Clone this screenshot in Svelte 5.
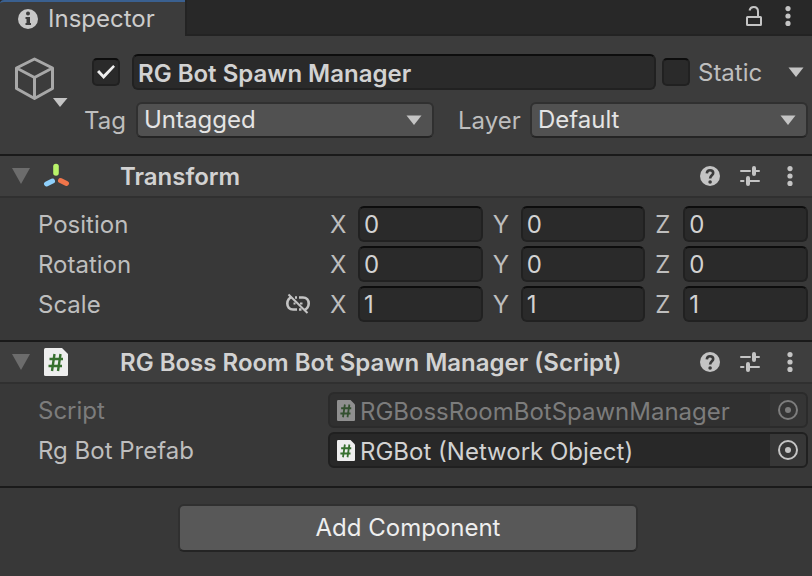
<script>
  let name = $state('RG Bot Spawn Manager');
  let active = $state(true);
  let isStatic = $state(false);
  let tag = $state('Untagged');
  let layer = $state('Default');
  let transform = $state([
    { label: 'Position', values: { X: '0', Y: '0', Z: '0' } },
    { label: 'Rotation', values: { X: '0', Y: '0', Z: '0' } },
    { label: 'Scale', values: { X: '1', Y: '1', Z: '1' }, linkable: true }
  ]);
  const references = [
    { id: 'script', label: 'Script', value: 'RGBossRoomBotSpawnManager', disabled: true },
    { id: 'prefab', label: 'Rg Bot Prefab', value: 'RGBot (Network Object)', disabled: false }
  ];
</script>

{#snippet arrow()}
  <svg class="arrow" width="16" height="10" viewBox="0 0 16 10" aria-hidden="true"><path d="M0.500 0.500H15.500L8 10Z" fill="#c4c4c4" /></svg>
{/snippet}

{#snippet dots()}
  <svg width="20" height="20" viewBox="0 0 20 20" aria-hidden="true" fill="#c4c4c4">
    <circle cx="10" cy="2.6" r="2.6" /><circle cx="10" cy="10" r="2.6" /><circle cx="10" cy="17.4" r="2.6" />
  </svg>
{/snippet}

{#snippet scriptIcon(width, height)}
  <svg class="file" {width} {height} viewBox="0 0 24 28" aria-hidden="true">
    <path d="M1.5 0H18L24 6V26.500Q24 28 22.500 28H1.500Q0 28 0 26.500V1.500Q0 0 1.500 0Z" fill="#eeeeee" />
    <path d="M10.500 6 8 23M16.500 6 14 23M5.500 11H19M4.500 18H18" stroke="#37702f" stroke-width="2.400" fill="none" />
  </svg>
{/snippet}

{#snippet headerTools()}
  <div class="tools">
    <button class="icon" aria-label="Open reference">
      <svg width="20" height="20" viewBox="0 0 20 20">
        <circle cx="10" cy="10" r="10" fill="#c4c4c4" />
        <path d="M6.800 7.300C7 5.200 8.200 4.200 10 4.200S13.200 5.300 13.200 7C13.200 9.300 10.100 9.300 10.100 12.500" fill="none" stroke="#3a3a3a" stroke-width="2.600" />
        <circle cx="10.100" cy="16" r="1.800" fill="#3a3a3a" />
      </svg>
    </button>
    <button class="icon" aria-label="Presets">
      <svg width="20" height="20" viewBox="0 0 20 20" fill="none" stroke="#c4c4c4">
        <path d="M1 5H10M16 5H19M1 15H3.500M10 15H19" stroke-width="2" stroke-linecap="round" />
        <path d="M14 2V8M8 12V18" stroke-width="4" stroke-linecap="round" />
      </svg>
    </button>
    <button class="icon" aria-label="More options">{@render dots()}</button>
  </div>
{/snippet}

{#snippet foldout()}
  <button class="icon" aria-label="Toggle section">
    <svg width="18" height="16" viewBox="0 0 18 16"><path d="M0 0H18L9 16Z" fill="#6c6c6c" /></svg>
  </button>
{/snippet}

<main>
  <header class="tabbar">
    <button class="tab">
      <svg width="20" height="20" viewBox="0 0 20 20" aria-hidden="true">
        <circle cx="10" cy="10" r="10" fill="#c8c8c8" />
        <circle cx="10" cy="4.500" r="2" fill="#3c3c3c" />
        <path d="M7.500 8H12V14H13V16H7.500V14H8.500V10H7.500Z" fill="#3c3c3c" />
      </svg>
      Inspector
    </button>
    <div class="tabtools">
      <button class="icon" aria-label="Lock">
        <svg width="20" height="20" viewBox="0 0 20 20" fill="none" stroke="#c4c4c4" stroke-width="2">
          <rect x="3" y="11" width="14" height="8" rx="0.500" />
          <path d="M5.500 4.500C6 2.300 7.500 1 9.700 1C12.500 1 14 3 14 5.500V10" />
        </svg>
      </button>
      <button class="icon" aria-label="Window menu">{@render dots()}</button>
    </div>
  </header>

  <section class="object">
    <button class="cube" aria-label="Select icon">
      <svg width="54" height="54" viewBox="0 0 54 54" fill="none">
        <path d="M20.500 5 38.500 14V34.500L20.500 44.500 2.500 34.500V14ZM2.500 14 20.500 23.500 38.500 14M20.500 23.500V44.500" stroke="#a8a8a8" stroke-width="3" stroke-linejoin="round" />
        <path d="M39 44H53.500L46 53Z" fill="#c4c4c4" />
      </svg>
    </button>
    <div class="fields">
      <div class="identity">
        <input type="checkbox" aria-label="Active" bind:checked={active} />
        <input class="box name" type="text" aria-label="Name" bind:value={name} />
        <input id="static" type="checkbox" bind:checked={isStatic} />
        <div class="static">
          <label for="static">Static</label>
          <button class="icon" aria-label="Static flags">{@render arrow()}</button>
        </div>
      </div>
      <div class="filters">
        <label class="taglabel" for="tag">Tag</label>
        <div class="select tagselect">
          <select id="tag" bind:value={tag}><option>Untagged</option><option>Player</option></select>
          {@render arrow()}
        </div>
        <label class="layerlabel" for="layer">Layer</label>
        <div class="select layerselect">
          <select id="layer" bind:value={layer}><option>Default</option><option>UI</option></select>
          {@render arrow()}
        </div>
      </div>
    </div>
  </section>

  <section class="component">
    <header class="title">
      {@render foldout()}
      <svg width="24" height="28" viewBox="0 0 24 28" aria-hidden="true" overflow="visible" fill="none" stroke-linecap="round">
        <path d="M12 4.500V11" stroke="#b9f36a" stroke-width="5.600" />
        <path d="M8.500 19 2.500 22" stroke="#8fd0fb" stroke-width="5" />
        <path d="M16.500 18.500 22.500 21.500" stroke="#f0754a" stroke-width="5" />
      </svg>
      <h2>Transform</h2>
      {@render headerTools()}
    </header>
    <div class="body">
      {#each transform as row}
        <div class="row">
          <div class="caption">
            <span class="text">{row.label}</span>
            {#if row.linkable}
              <button class="icon" aria-label="Constrain proportions">
                <svg width="24" height="22" viewBox="0 0 24 22" fill="none" stroke="#c4c4c4" stroke-width="2.600">
                  <path d="M11 16.500H7C3.500 16.500 1.300 14 1.300 10.500S3.500 4.500 5.500 4.500M13 4.500H17C20.500 4.500 22.700 7 22.700 10.500S20.500 16.500 18.500 16.500M13 16.500H15.500M9 4.500H11" />
                  <path d="M7.500 10.500H9.500M14 10.500H16.500" stroke-width="2" />
                  <path d="M2.500 1.500 21.500 20" stroke-width="2" />
                </svg>
              </button>
            {/if}
          </div>
          <div class="vector">
            {#each ['X', 'Y', 'Z'] as axis}
              <label><span class="text">{axis}</span><input class="box" type="text" aria-label="{row.label} {axis}" bind:value={row.values[axis]} /></label>
            {/each}
          </div>
        </div>
      {/each}
    </div>
  </section>

  <section class="component">
    <header class="title">
      {@render foldout()}
      {@render scriptIcon(24, 28)}
      <h2>RG Boss Room Bot Spawn Manager (Script)</h2>
      {@render headerTools()}
    </header>
    <div class="body">
      {#each references as ref}
        <div class="row" class:disabled={ref.disabled}>
          <label class="caption" for={ref.id}><span class="text">{ref.label}</span></label>
          <div class="reference">
            {@render scriptIcon(18, 21)}
            <input id={ref.id} type="text" value={ref.value} readonly disabled={ref.disabled} />
            <button class="picker" aria-label="Pick {ref.label}" disabled={ref.disabled}>
              <svg width="20" height="20" viewBox="0 0 20 20">
                <circle cx="10" cy="10" r="9" fill="none" stroke="#c4c4c4" stroke-width="2" />
                <circle cx="10" cy="10" r="3" fill="#c4c4c4" />
              </svg>
            </button>
          </div>
        </div>
      {/each}
    </div>
  </section>

  <footer><button class="add">Add Component</button></footer>
</main>

<style>
  :global(body) { margin: 0; background: #383838; }
  main, button, input, select { font: 400 24px/30px Inter, "Liberation Sans", sans-serif; color: #bebebe; }
  main *, main { box-sizing: border-box; }
  button { margin: 0; padding: 0; border: 0; background: none; }
  svg { display: block; flex: none; }
  .icon { display: flex; flex: none; }
  input { margin: 0; min-width: 0; }

  .tabbar { display: flex; justify-content: space-between; height: 36px; background: #282828; box-shadow: inset 0 -2px #232323; }
  .tab { display: flex; align-items: center; gap: 10px; padding: 0 30px 0 18px; border-top: 2px solid #3a6090; border-radius: 4px 0 0 0; background: #3c3c3c; color: #cccccc; box-shadow: 2px 0 #232323; }
  .tabtools { display: flex; align-items: center; gap: 14px; padding: 0 14px 4px 0; }

  .object { display: flex; padding: 18px 4px 16px 14px; background: #3c3c3c; border-bottom: 2px solid #1a1a1a; }
  .cube { align-self: flex-start; }
  .fields { flex: 1; min-width: 0; display: flex; flex-direction: column; gap: 12px; }
  .identity, .filters { display: flex; align-items: center; }
  .identity { padding: 0 4px 0 24px; }
  .box { width: 100%; height: 36px; padding: 0 4px; border: 2px solid #212121; border-top-color: #0d0d0d; border-radius: 6px; background: #2a2a2a; color: #d2d2d2; outline: none; }
  .name { flex: 1; margin: 0 6px 0 12px; padding-top: 2px; font-weight: 600; }
  input[type='checkbox'] { appearance: none; flex: none; width: 28px; height: 28px; border: 2px solid #212121; border-top-color: #0d0d0d; border-radius: 5px; background: #2a2a2a; display: grid; place-items: center; }
  input[type='checkbox']:checked::before { content: ''; width: 18px; height: 14px; background: #eeeeee; clip-path: polygon(0 50%, 12% 36%, 36% 70%, 90% 0, 100% 12%, 37% 100%); }
  .static { display: flex; align-items: center; justify-content: space-between; width: 106px; margin-left: 8px; }
  .filters { padding-left: 16px; }
  .static label, .filters label, .text, h2 { padding-top: 2px; }
  .taglabel { width: 52px; }
  .layerlabel { width: 72px; margin-left: 24px; }
  .select { display: grid; align-items: center; min-width: 0; }
  .tagselect { flex: 15 1 0; }
  .layerselect { flex: 14 1 0; }
  select { appearance: none; grid-area: 1 / 1; width: 100%; height: 36px; padding: 0 32px 0 6px; border: 2px solid #303030; border-bottom-color: #242424; border-radius: 6px; background: #515151; color: #e4e4e4; outline: none; }
  .select .arrow { grid-area: 1 / 1; justify-self: end; margin-right: 12px; pointer-events: none; }

  .component { border-bottom: 2px solid #1a1a1a; }
  .title { display: flex; align-items: center; gap: 14px; height: 42px; padding: 0 12px; background: #3e3e3e; border-bottom: 2px solid #303030; }
  h2 { flex: 1; min-width: 0; margin: 0 0 0 38px; font-size: 24px; line-height: 30px; font-weight: 600; color: #d2d2d2; white-space: nowrap; }
  .tools { display: flex; gap: 20px; }
  .body { display: flex; flex-direction: column; gap: 4px; padding: 8px 4px 18px 38px; }
  .row { display: grid; grid-template-columns: 29fr 48fr; align-items: center; }
  .caption { display: flex; align-items: center; justify-content: space-between; padding-right: 18px; white-space: nowrap; }
  .vector { display: grid; grid-template-columns: repeat(3, 1fr); gap: 10px; padding-left: 2px; }
  .vector label { display: grid; grid-template-columns: 28px 1fr; align-items: center; }

  .reference { display: flex; align-items: center; height: 36px; padding-left: 7px; border: 2px solid #202020; border-radius: 6px; background: #282828; overflow: hidden; }
  .reference input { flex: 1; height: 32px; padding: 2px 0 0 5px; border: 0; background: none; color: #d2d2d2; outline: none; }
  .picker { display: grid; place-items: center; width: 36px; height: 32px; background: #373737; }
  .disabled .caption { color: #7c7c7c; }
  .disabled .reference { border-color: #2b2b2b; background: #303030; }
  .disabled .reference input { color: #7c7c7c; }
  .disabled .file { opacity: 0.5; }
  .disabled .picker { background: #353535; }
  .disabled .picker svg { opacity: 0.5; }

  footer { display: flex; justify-content: center; padding: 16px 0 24px 4px; }
  .add { width: 460px; max-width: 100%; height: 48px; border: 2px solid #303030; border-bottom-color: #242424; border-radius: 6px; background: #585858; color: #eeeeee; }
</style>
